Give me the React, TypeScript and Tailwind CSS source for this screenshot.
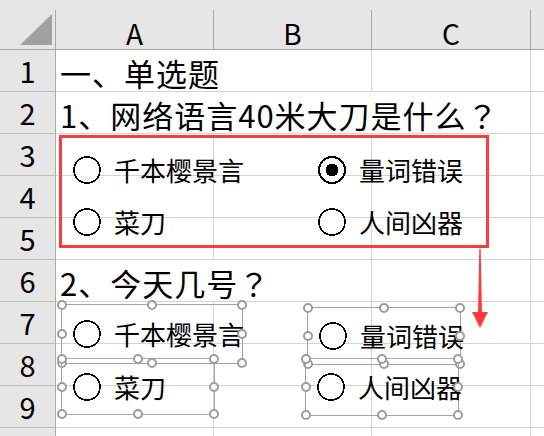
import React from "react";

type Row = { n: string; text?: string; span?: number };

const rows: Row[] = [
  { n: "1", text: "一、单选题", span: 2 },
  { n: "2", text: "1、网络语言40米大刀是什么", span: 3 },
  { n: "3" },
  { n: "4" },
  { n: "5" },
  { n: "6", text: "2、今天几号", span: 2 },
  { n: "7" },
  { n: "8" },
  { n: "9" },
  { n: "" },
];

const spanWidth: Record<number, string> = {
  1: "w-[158px]",
  2: "w-[316px]",
  3: "w-[475px]",
};

const Radio = ({ checked = false }: { checked?: boolean }) => (
  <svg width="28" height="28" viewBox="0 0 28 28" className="shrink-0" shapeRendering="crispEdges">
    <circle cx="14" cy="14" r="13" fill="white" stroke="black" strokeWidth={checked ? 2 : 1.5} />
    {checked && <circle cx="14" cy="14" r="6.5" fill="black" />}
  </svg>
);

const Option = ({ label, checked }: { label: string; checked?: boolean }) => (
  <div className="flex items-center gap-[13px]">
    <Radio checked={checked} />
    <span className="whitespace-nowrap text-[26px] leading-none">{label}</span>
  </div>
);

const Handles = () => {
  const spots = [
    "left-0 top-0",
    "left-1/2 top-0",
    "left-full top-0",
    "left-0 top-1/2",
    "left-full top-1/2",
    "left-0 top-full",
    "left-1/2 top-full",
    "left-full top-full",
  ];
  return (
    <>
      {spots.map((s) => (
        <div
          key={s}
          className={`absolute ${s} size-[10px] -translate-x-1/2 -translate-y-1/2 rounded-full border-2 border-[#9c9c9c] bg-white`}
        />
      ))}
    </>
  );
};

const ShapeBox = ({ className, label }: { className: string; label: string }) => (
  <div className={`absolute flex items-center gap-[13px] border border-[#a3a3a3] pl-[11px] ${className}`}>
    <Radio />
    <span className="whitespace-nowrap text-[26px] leading-none">{label}</span>
    <Handles />
  </div>
);

export default function App() {
  return (
    <div className="relative h-[436px] w-[544px] overflow-hidden bg-white font-['Noto_Sans_CJK_SC',sans-serif] text-black">
      {/* column headers */}
      <div className="flex h-[50px] items-end border-b border-[#a8a8a8] bg-[#e6e6e6]">
        <div className="h-[39px] w-[56px] shrink-0 border-r border-[#a8a8a8]">
          <svg width="55" height="39" viewBox="0 0 55 39">
            <polygon points="20,35 52,35 52,4" fill="#a0a0a0" />
          </svg>
        </div>
        {["A", "B", "C"].map((c, i) => (
          <div
            key={c}
            className={`flex h-[39px] shrink-0 items-center justify-center border-r border-[#a8a8a8] pt-[6px] text-[28px] leading-none ${
              i === 2 ? "w-[159px]" : "w-[158px]"
            }`}
          >
            {c}
          </div>
        ))}
        <div className="h-[39px] flex-1" />
      </div>

      {/* rows */}
      {rows.map((r) => {
        const span = r.span ?? 1;
        const rest = [158, 158, 159].slice(span);
        return (
          <div key={r.n || "x"} className="flex h-[42px]">
            <div className="flex w-[56px] shrink-0 items-center justify-center border-r border-b border-r-[#a8a8a8] border-b-[#bfbfbf] bg-[#e6e6e6] text-[29px] leading-none">
              {r.n}
            </div>
            <div
              className={`flex shrink-0 items-center border-r border-b border-[#d4d4d4] pl-[4px] pt-[3px] ${spanWidth[span]}`}
            >
              {r.text && (
                <span className="whitespace-nowrap text-[31px] leading-none tracking-[1px]">
                  {r.text}
                  {r.n !== "1" && <span className="font-['Noto_Sans_CJK_JP',sans-serif]">？</span>}
                </span>
              )}
            </div>
            {rest.map((w, i) => (
              <div
                key={i}
                className={`shrink-0 border-r border-b border-[#d4d4d4] ${w === 159 ? "w-[159px]" : "w-[158px]"}`}
              />
            ))}
            <div className="flex-1 border-b border-[#d4d4d4]" />
          </div>
        );
      })}

      {/* question 1 group, highlighted */}
      <div className="absolute left-[59px] top-[135px] h-[113px] w-[430px] border-[3px] border-[#ff3b3b]">
        <div className="grid grid-cols-[245px_1fr] grid-rows-[52px_52px] pl-[11px] pt-[6px]">
          <Option label="千本樱景言" />
          <Option label="量词错误" checked />
          <Option label="菜刀" />
          <Option label="人间凶器" />
        </div>
      </div>

      {/* arrow */}
      <svg className="absolute left-[470px] top-[246px]" width="20" height="84" viewBox="0 0 20 84">
        <polygon points="9.3,3 10.7,3 12,67 8,67" fill="#ff3b3b" />
        <polygon points="2,66 18,66 10,82" fill="#ff3b3b" />
      </svg>

      {/* question 2, selected shapes */}
      <ShapeBox className="left-[61px] top-[304px] h-[60px] w-[182px]" label="千本樱景言" />
      <ShapeBox className="left-[307px] top-[307px] h-[58px] w-[154px]" label="量词错误" />
      <ShapeBox className="left-[61px] top-[358px] h-[57px] w-[154px]" label="菜刀" />
      <ShapeBox className="left-[305px] top-[358px] h-[58px] w-[154px]" label="人间凶器" />
    </div>
  );
}
